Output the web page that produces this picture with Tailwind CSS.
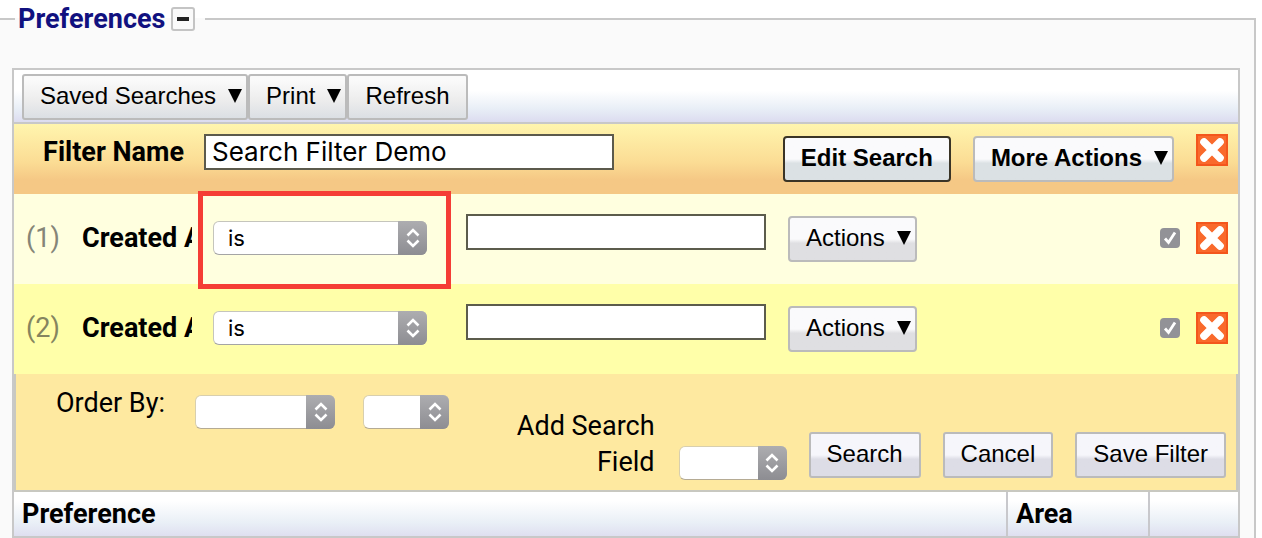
<!DOCTYPE html>
<html lang="en">
<head>
  <meta charset="UTF-8">
  <meta name="viewport" content="width=device-width, initial-scale=1.0">
  <title>Preferences</title>
  <script src="https://cdn.jsdelivr.net/npm/@tailwindcss/browser@4"></script>
</head>
<body class="bg-white font-[Roboto,sans-serif] text-[27px] leading-9 text-black">

  <!-- shared icons -->
  <svg class="hidden">
    <symbol id="down" viewBox="0 0 14 14"><path d="M0 0h14L7 14z"/></symbol>
    <symbol id="updown" viewBox="0 0 14 20"><path d="M1.500 7.500L7 2l5.500 5.500M1.500 12.500L7 18l5.500-5.500" fill="none" stroke="#fff" stroke-width="2.600"/></symbol>
    <symbol id="remove" viewBox="0 0 32 32">
      <rect width="32" height="32" fill="#f96a2c"/>
      <rect x="1" y="1" width="30" height="30" fill="none" stroke="#f4561c" stroke-width="2"/>
      <path d="M8 8l16 16M24 8L8 24" stroke="#fff" stroke-width="7.500" stroke-linecap="round"/>
      <path d="M8.500 8.500l15 15M23.500 8.500l-15 15" stroke="#fff" stroke-width="6.500" stroke-linecap="square"/>
    </symbol>
  </svg>

  <fieldset class="min-h-screen border-t-2 border-r-2 border-[#c8c8c8] bg-[#fafafa] mr-[6px] pl-3 pr-[14px] pt-[30px]">
    <legend class="ml-[3px] flex h-[38px] items-center gap-[6px] pl-[3px] pr-[10px] font-bold text-[#11117f]">
      Preferences
      <button type="button" aria-label="Collapse" class="flex size-6 items-center justify-center rounded-[3px] border-2 border-[#c4c4c4] bg-[#fafafa]">
        <span class="h-1 w-3 bg-[#222]"></span>
      </button>
    </legend>

    <div class="border-2 border-[#c8c8c8]">

      <!-- toolbar -->
      <div class="flex border-b-2 border-[#c8c8c8] bg-linear-to-b from-white from-40% via-[#e8eef6] via-75% to-[#dcdcf0] px-2 pt-1 pb-[2px] font-['Liberation_Sans',sans-serif] text-[24px]">
        <button type="button" class="flex h-[46px] items-center gap-3 rounded-[3px] border-2 border-[#bbb] bg-linear-to-b from-[#fafafa] from-10% via-[#ececec] via-60% to-[#dbdfe4] pl-4 pr-1 pb-[2px]">
          Saved Searches <svg class="size-[14px]"><use href="#down"/></svg>
        </button>
        <button type="button" class="flex h-[46px] items-center gap-3 rounded-[3px] border-2 border-[#bbb] bg-linear-to-b from-[#fafafa] from-10% via-[#ececec] via-60% to-[#dbdfe4] pl-4 pr-1 pb-[2px]">
          Print <svg class="size-[14px]"><use href="#down"/></svg>
        </button>
        <button type="button" class="h-[46px] rounded-[3px] border-2 border-[#bbb] bg-linear-to-b from-[#fafafa] from-10% via-[#ececec] via-60% to-[#dbdfe4] px-4 pb-[2px]">Refresh</button>
      </div>

      <!-- filter name -->
      <div class="flex h-[70px] items-start bg-linear-to-b from-[#fff5ae] via-[#fbdc94] via-55% to-[#f5c885] to-80% pt-[10px] pr-[10px]">
        <label for="filterName" class="w-[190px] shrink-0 pr-5 text-right font-bold">Filter Name</label>
        <input id="filterName" type="text" value="Search Filter Demo" class="h-9 w-[410px] border-2 border-[#5c5a4c] bg-white px-[6px] font-[Inter,sans-serif] text-[26px]">
        <div class="ml-auto flex items-start gap-[22px] font-['Liberation_Sans',sans-serif] text-[24px] font-bold">
          <button type="button" class="mt-[2px] h-[46px] rounded-[4px] border-2 border-[#3a3426] bg-linear-to-b from-[#fafafc] from-50% to-[#dbe1e4] to-60% px-4 pb-[2px]">Edit Search</button>
          <button type="button" class="mt-[2px] flex h-[46px] items-center gap-3 rounded-[4px] border-2 border-[#bbb] bg-linear-to-b from-[#fafafc] from-50% to-[#dbe1e4] to-60% pl-4 pr-1 pb-[2px]">
            More Actions <svg class="size-[14px]"><use href="#down"/></svg>
          </button>
          <button type="button" aria-label="Remove filter"><svg class="size-8"><use href="#remove"/></svg></button>
        </div>
      </div>

      <!-- condition 1 -->
      <div class="flex h-[90px] items-start bg-[#ffffdf] pt-5 pb-[22px] pl-3 pr-[10px]">
        <span class="w-14 shrink-0 self-center text-[#858578]">(1)</span>
        <span class="w-[110px] shrink-0 self-center overflow-hidden font-bold whitespace-nowrap">Created At</span>
        <div class="relative ml-[21px] w-[214px] self-center">
          <select aria-label="Created At operator 1" class="block h-[34px] w-full appearance-none rounded-[6px] border border-[#c5c5bc] border-b-[#a5a5a5] bg-white px-[14px] font-[Inter,sans-serif] text-[22px] leading-8"><option>is</option></select>
          <span class="pointer-events-none absolute inset-y-0 right-0 flex w-[29px] items-center justify-center rounded-r-[6px] bg-linear-to-b from-[#adadb0] to-[#8d8d92]"><svg class="h-5 w-[14px]"><use href="#updown"/></svg></span>
          <span class="pointer-events-none absolute -top-[30px] -right-6 -bottom-[34px] -left-[15px] border-[5px] border-[#f53d35]"></span>
        </div>
        <input type="text" aria-label="Created At value 1" class="ml-[39px] h-9 w-[300px] border-2 border-[#5c5c4c] bg-white px-[6px] font-[Inter,sans-serif] text-[26px]">
        <button type="button" class="ml-[22px] flex h-[46px] items-center gap-3 self-end rounded-[4px] border-2 border-[#bbb] bg-linear-to-b from-[#fafafc] from-50% to-[#dfdfe2] to-60% pl-4 pr-1 pb-[2px] font-['Liberation_Sans',sans-serif] text-[24px]">
          Actions <svg class="size-[14px]"><use href="#down"/></svg>
        </button>
        <div class="ml-auto flex items-center gap-4 self-center">
          <span class="relative size-5">
            <input type="checkbox" checked aria-label="Use condition 1" class="block size-5 appearance-none rounded-[4px] bg-[#929297]">
            <svg class="pointer-events-none absolute inset-0 size-5" viewBox="0 0 20 20"><path d="M5 10.500l3.500 4L15 4.500" fill="none" stroke="#fff" stroke-width="2.800"/></svg>
          </span>
          <button type="button" aria-label="Remove condition 1"><svg class="size-8"><use href="#remove"/></svg></button>
        </div>
      </div>

      <!-- condition 2 -->
      <div class="flex h-[90px] items-start bg-[#ffffa9] pt-5 pb-[22px] pl-3 pr-[10px]">
        <span class="w-14 shrink-0 self-center text-[#85855f]">(2)</span>
        <span class="w-[110px] shrink-0 self-center overflow-hidden font-bold whitespace-nowrap">Created At</span>
        <div class="relative ml-[21px] w-[214px] self-center">
          <select aria-label="Created At operator 2" class="block h-[34px] w-full appearance-none rounded-[6px] border border-[#c5c5bc] border-b-[#a5a5a5] bg-white px-[14px] font-[Inter,sans-serif] text-[22px] leading-8"><option>is</option></select>
          <span class="pointer-events-none absolute inset-y-0 right-0 flex w-[29px] items-center justify-center rounded-r-[6px] bg-linear-to-b from-[#adadb0] to-[#8d8d92]"><svg class="h-5 w-[14px]"><use href="#updown"/></svg></span>
        </div>
        <input type="text" aria-label="Created At value 2" class="ml-[39px] h-9 w-[300px] border-2 border-[#5c5c4c] bg-white px-[6px] font-[Inter,sans-serif] text-[26px]">
        <button type="button" class="ml-[22px] flex h-[46px] items-center gap-3 self-end rounded-[4px] border-2 border-[#bbb] bg-linear-to-b from-[#fafafc] from-50% to-[#dfdfe2] to-60% pl-4 pr-1 pb-[2px] font-['Liberation_Sans',sans-serif] text-[24px]">
          Actions <svg class="size-[14px]"><use href="#down"/></svg>
        </button>
        <div class="ml-auto flex items-center gap-4 self-center">
          <span class="relative size-5">
            <input type="checkbox" checked aria-label="Use condition 2" class="block size-5 appearance-none rounded-[4px] bg-[#929297]">
            <svg class="pointer-events-none absolute inset-0 size-5" viewBox="0 0 20 20"><path d="M5 10.500l3.500 4L15 4.500" fill="none" stroke="#fff" stroke-width="2.800"/></svg>
          </span>
          <button type="button" aria-label="Remove condition 2"><svg class="size-8"><use href="#remove"/></svg></button>
        </div>
      </div>

      <!-- order / add field / submit -->
      <div class="flex h-[118px] items-end border-x-2 border-b-2 border-[#c8c8c0] bg-[#fee9a0] pt-[11px] pb-[10px] pr-[10px]">
        <label for="orderBy" class="w-[149px] shrink-0 self-start text-right">Order By:</label>
        <div class="relative mt-[10px] ml-[30px] w-[140px] self-start">
          <select id="orderBy" class="block h-[34px] w-full appearance-none rounded-[6px] border border-[#d8cfae] border-b-[#b5ab94] bg-white"><option></option></select>
          <span class="pointer-events-none absolute inset-y-0 right-0 flex w-[29px] items-center justify-center rounded-r-[6px] bg-linear-to-b from-[#adadb0] to-[#8d8d92]"><svg class="h-5 w-[14px]"><use href="#updown"/></svg></span>
        </div>
        <div class="relative mt-[10px] ml-7 w-[86px] self-start">
          <select aria-label="Order direction" class="block h-[34px] w-full appearance-none rounded-[6px] border border-[#d8cfae] border-b-[#b5ab94] bg-white"><option></option></select>
          <span class="pointer-events-none absolute inset-y-0 right-0 flex w-[29px] items-center justify-center rounded-r-[6px] bg-linear-to-b from-[#adadb0] to-[#8d8d92]"><svg class="h-5 w-[14px]"><use href="#updown"/></svg></span>
        </div>
        <label for="addField" class="ml-auto w-[150px] text-right">Add Search Field</label>
        <div class="relative ml-6 w-[108px]">
          <select id="addField" class="block h-[34px] w-full appearance-none rounded-[6px] border border-[#d8cfae] border-b-[#b5ab94] bg-white"><option></option></select>
          <span class="pointer-events-none absolute inset-y-0 right-0 flex w-[29px] items-center justify-center rounded-r-[6px] bg-linear-to-b from-[#adadb0] to-[#8d8d92]"><svg class="h-5 w-[14px]"><use href="#updown"/></svg></span>
        </div>
        <div class="mb-[2px] ml-[22px] flex gap-[22px] font-['Liberation_Sans',sans-serif] text-[24px]">
          <button type="button" class="h-[46px] rounded-[3px] border-2 border-[#bbb] bg-linear-to-b from-[#f6f6fb] from-50% to-[#dddde6] to-60% px-4 pb-[2px]">Search</button>
          <button type="button" class="h-[46px] rounded-[3px] border-2 border-[#bbb] bg-linear-to-b from-[#f6f6fb] from-50% to-[#dddde6] to-60% px-4 pb-[2px]">Cancel</button>
          <button type="button" class="h-[46px] rounded-[3px] border-2 border-[#bbb] bg-linear-to-b from-[#f6f6fb] from-50% to-[#dddde6] to-60% px-4 pb-[2px]">Save Filter</button>
        </div>
      </div>

      <!-- results -->
      <table class="w-full table-fixed text-left">
        <thead>
          <tr class="h-11 bg-linear-to-b from-white from-20% via-[#e9eff6] via-70% to-[#dfdff0]">
            <th class="px-2">Preference</th>
            <th class="w-[142px] border-l-2 border-[#c8c8cc] px-2">Area</th>
            <th class="w-[89px] border-l-2 border-[#c8c8cc]"></th>
          </tr>
        </thead>
      </table>
    </div>
  </fieldset>

</body>
</html>
